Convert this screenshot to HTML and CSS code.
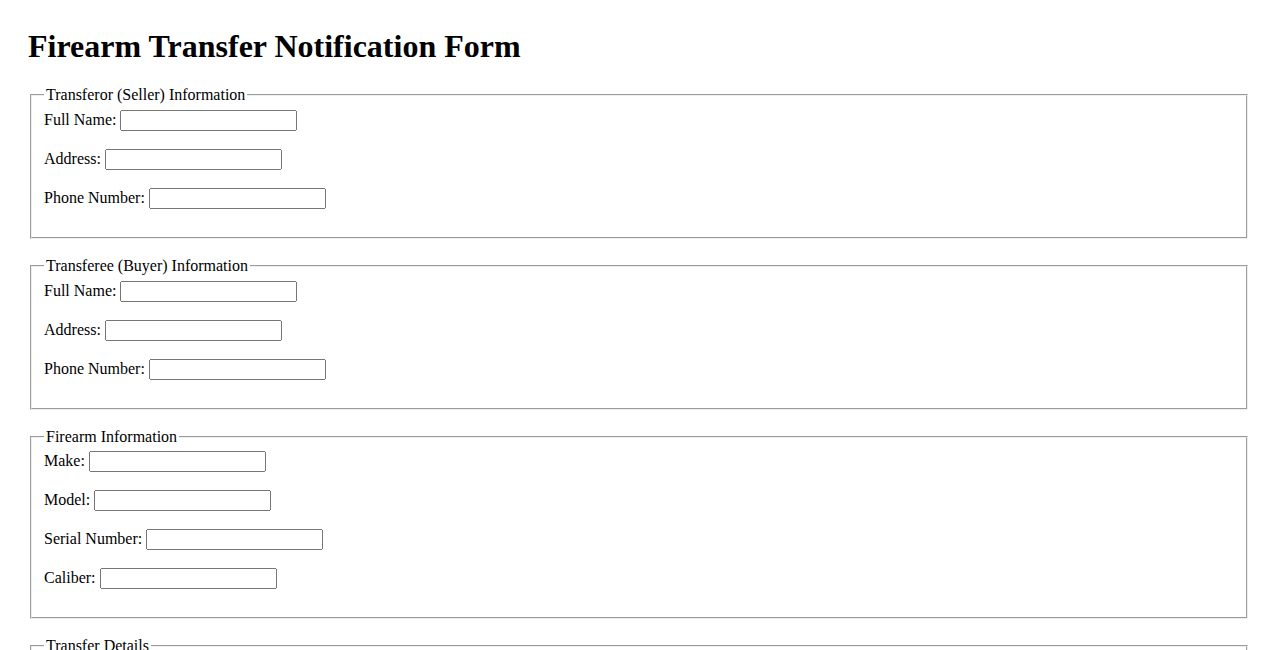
FILE: index.html
```html
<!DOCTYPE html>
<html lang="en">
<head>
  <meta charset="UTF-8">
  <title>Firearm Transfer Notification Form</title>
  <link rel="stylesheet" href="styles.css">
</head>
<body>

  <h1>Firearm Transfer Notification Form</h1>

  <form>
    <fieldset>
      <legend>Transferor (Seller) Information</legend>
      <label for="seller-name">Full Name:</label>
      <input type="text" id="seller-name"><br><br>
      <label for="seller-address">Address:</label>
      <input type="text" id="seller-address"><br><br>
      <label for="seller-phone">Phone Number:</label>
      <input type="text" id="seller-phone"><br><br>
    </fieldset>

    <fieldset>
      <legend>Transferee (Buyer) Information</legend>
      <label for="buyer-name">Full Name:</label>
      <input type="text" id="buyer-name"><br><br>
      <label for="buyer-address">Address:</label>
      <input type="text" id="buyer-address"><br><br>
      <label for="buyer-phone">Phone Number:</label>
      <input type="text" id="buyer-phone"><br><br>
    </fieldset>

    <fieldset>
      <legend>Firearm Information</legend>
      <label for="make">Make:</label>
      <input type="text" id="make"><br><br>
      <label for="model">Model:</label>
      <input type="text" id="model"><br><br>
      <label for="serial">Serial Number:</label>
      <input type="text" id="serial"><br><br>
      <label for="caliber">Caliber:</label>
      <input type="text" id="caliber"><br><br>
    </fieldset>

    <fieldset>
      <legend>Transfer Details</legend>
      <label for="transfer-date">Date of Transfer:</label>
      <input type="text" id="transfer-date"><br><br>
      <label for="location">Location:</label>
      <input type="text" id="location"><br><br>
    </fieldset>
  </form>

</body>
</html>
```

FILE: styles.css
```css
body {
  font-family: 'Liberation Serif', 'Times New Roman', serif;
  padding: 20px;
}

h1 {
  margin-top: 0;
}

fieldset {
  margin-bottom: 18px;
}

input[type="text"] {
  width: 177px;
  box-sizing: border-box;
}
```
